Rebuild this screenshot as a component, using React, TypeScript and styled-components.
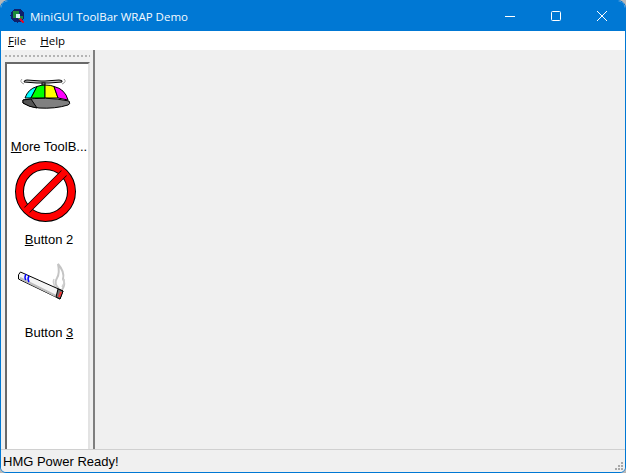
import styled, { createGlobalStyle } from 'styled-components'

const GlobalStyle = createGlobalStyle`
  html, body {
    margin: 0;
    padding: 0;
    width: 626px;
    height: 473px;
    overflow: hidden;
    background: #b8b8b8;
  }
`

const Window = styled.div`
  box-sizing: border-box;
  width: 626px;
  height: 473px;
  display: flex;
  flex-direction: column;
  border: 1px solid #0078d4;
  border-radius: 8px 8px 6px 6px;
  background: #f0f0f0;
  overflow: hidden;
  font-family: 'Liberation Sans', Arial, sans-serif;
`

const TitleBar = styled.header`
  height: 30px;
  flex: none;
  display: flex;
  align-items: center;
  background: #0078d4;
  color: #fff;
`

const AppIcon = styled.svg`
  width: 16px;
  height: 16px;
  margin-left: 9px;
  flex: none;
`

const TitleText = styled.span`
  margin-left: 4px;
  font-family: 'Open Sans', sans-serif;
  font-size: 11.5px;
  color: #f6fbfe;
  white-space: nowrap;
  flex: 1;
`

const WindowButton = styled.div`
  width: 46px;
  height: 30px;
  display: flex;
  align-items: center;
  justify-content: center;
`

const MenuBar = styled.nav`
  height: 19px;
  flex: none;
  box-sizing: border-box;
  display: flex;
  align-items: center;
  background: #fff;
  padding: 0 0 0 7px;
  gap: 14px;
  font-family: 'Open Sans', sans-serif;
  font-size: 11.5px;
  color: #000;
`

const Body = styled.div`
  flex: 1;
  min-height: 0;
  display: flex;
`

const ToolArea = styled.aside`
  width: 94px;
  flex: none;
  box-sizing: border-box;
  display: flex;
  flex-direction: column;
  padding: 5px 3px 0 4px;
  border-right: 2px solid #7f7f7f;
`

const Gripper = styled.div`
  height: 2px;
  flex: none;
  margin: 0 0 5px 0;
  background-image: linear-gradient(to right, #b4b4b4 2px, transparent 2px);
  background-size: 4px 2px;
`

const ToolPanel = styled.div`
  flex: 1;
  box-sizing: border-box;
  display: flex;
  flex-direction: column;
  background: #fff;
  border-top: 2px solid #696969;
  border-left: 2px solid #696969;
  border-right: 2px solid #e3e3e3;
`

const ToolButton = styled.div`
  height: 93px;
  flex: none;
  display: flex;
  flex-direction: column;
  align-items: flex-start;
  padding-top: 3px;
  box-sizing: border-box;
`

const ToolIcon = styled.svg`
  width: 64px;
  height: 64px;
  margin-left: 8px;
  flex: none;
`

const ToolLabel = styled.span`
  box-sizing: border-box;
  width: 100%;
  margin-top: 8px;
  padding-left: 3px;
  text-align: center;
  font-size: 13px;
  line-height: 16px;
  color: #000;
  white-space: nowrap;
`

const Client = styled.main`
  flex: 1;
  background: #f0f0f0;
`

const StatusBar = styled.footer`
  height: 23px;
  flex: none;
  box-sizing: border-box;
  position: relative;
  display: flex;
  align-items: center;
  padding-left: 2px;
  border-top: 1px solid #d0d0d0;
  background: #f0f0f0;
  font-size: 13px;
  color: #000;
`

const Grip = styled.svg`
  position: absolute;
  right: 1px;
  bottom: 1px;
  width: 9px;
  height: 9px;
`

const PixelGroup = styled.g`
  shape-rendering: crispEdges;
`

function HatIcon() {
  return (
    <ToolIcon viewBox="0 0 64 64">
      <path d="M9 15 Q9 13 12 13 L26 14 L30 14 L44 13 Q48 13 47 15 L34 16 L22 16 Z" fill="#bdbdbd" stroke="#000" strokeWidth="1" />
      <path d="M7 12 Q4 15 9 17 M49 12 Q52 15 47 17" fill="none" stroke="#9a9a9a" strokeWidth="1" />
      <rect x="27" y="16" width="3" height="2" fill="#d0d0d0" stroke="#000" strokeWidth="1" />
      <path d="M10 31 Q13 22 22 19.5 L16 31 Z" fill="#00ffff" stroke="#000" strokeWidth="1" />
      <path d="M16 31 L22 19.5 Q26 18 30 18 L30 31 Z" fill="#00ff00" stroke="#000" strokeWidth="1" />
      <path d="M30 31 L30 18 Q36 18 39 19.5 L43 31 Z" fill="#ffff00" stroke="#000" strokeWidth="1" />
      <path d="M43 31 L39 19.5 Q50 22 53 33 Z" fill="#ff00ff" stroke="#000" strokeWidth="1" />
      <path d="M8 33 Q30 29 54 34 Q56 37 53 38 Q40 42 24 41 Q14 40 8 36 Z" fill="#808080" stroke="#000" strokeWidth="1" />
      <path d="M8 33 L16 32 L22 41 Q14 40 8 36 Z" fill="#555" stroke="#000" strokeWidth="1" />
    </ToolIcon>
  )
}

function NoIcon() {
  return (
    <ToolIcon viewBox="0 0 64 64">
      <circle cx="30.5" cy="31.5" r="26" fill="none" stroke="#000" strokeWidth="9" />
      <circle cx="30.5" cy="31.5" r="26" fill="none" stroke="#ff0000" strokeWidth="7" />
      <path d="M49 13 L12 50" stroke="#000" strokeWidth="8" />
      <path d="M51 11 L10 52" stroke="#ff0000" strokeWidth="6.5" />
    </ToolIcon>
  )
}

function CigaretteIcon() {
  return (
    <ToolIcon viewBox="0 0 64 64">
      <path d="M45 37 Q38 31 42 25 Q45 20 43 11 Q50 19 48 26 Q51 31 47 37" fill="none" stroke="#c4c4c4" strokeWidth="2" />
      <path d="M41 35 Q37 30 39 26 M47 34 Q50 30 49 26" fill="none" stroke="#d0d0d0" strokeWidth="1.5" />
      <path d="M5.5 19 L48 38 L45 46 L3.5 26 Q2.5 21 5.5 19 Z" fill="#f4f4f4" stroke="#000" strokeWidth="1" />
      <path d="M5 25 L45 45" stroke="#bdbdbd" strokeWidth="2" />
      <path d="M11 21 Q9 25 11 27 M14 23 Q12 26 14 29" fill="none" stroke="#0000ff" strokeWidth="1.5" />
      <path d="M43 36 L48 38 L45 46 L41 44 Z" fill="#707070" stroke="#000" strokeWidth="1" />
      <path d="M46 39 L44 44" stroke="#ff3030" strokeWidth="2" />
    </ToolIcon>
  )
}

export default function App() {
  return (
    <Window>
      <GlobalStyle />
      <TitleBar>
        <AppIcon viewBox="0 0 16 16">
          <PixelGroup>
            <circle cx="7.5" cy="7.5" r="7" fill="#10206a" />
            <path d="M3 3 H9 V6 H6 V10 H3 Z" fill="#1d8a3c" />
            <path d="M8 8 H13 V11 H8 Z" fill="#1d8a3c" />
            <rect x="6" y="6" width="4" height="4" fill="#d8eef8" />
            <path d="M10 11 L14 15" stroke="#d01030" strokeWidth="2" />
          </PixelGroup>
        </AppIcon>
        <TitleText>MiniGUI ToolBar WRAP Demo</TitleText>
        <WindowButton>
          <svg width="10" height="10" viewBox="0 0 10 10"><path d="M0 5.5 H10" stroke="#fff" strokeWidth="1" /></svg>
        </WindowButton>
        <WindowButton>
          <svg width="10" height="10" viewBox="0 0 10 10"><rect x="0.5" y="0.5" width="9" height="9" rx="1" fill="none" stroke="#fff" strokeWidth="1" /></svg>
        </WindowButton>
        <WindowButton>
          <svg width="10" height="10" viewBox="0 0 10 10"><path d="M0 0 L10 10 M10 0 L0 10" stroke="#fff" strokeWidth="1" /></svg>
        </WindowButton>
      </TitleBar>
      <MenuBar>
        <span><u>F</u>ile</span>
        <span><u>H</u>elp</span>
      </MenuBar>
      <Body>
        <ToolArea>
          <Gripper />
          <ToolPanel>
            <ToolButton>
              <HatIcon />
              <ToolLabel><u>M</u>ore ToolB...</ToolLabel>
            </ToolButton>
            <ToolButton>
              <NoIcon />
              <ToolLabel><u>B</u>utton 2</ToolLabel>
            </ToolButton>
            <ToolButton>
              <CigaretteIcon />
              <ToolLabel>Button <u>3</u></ToolLabel>
            </ToolButton>
          </ToolPanel>
        </ToolArea>
        <Client />
      </Body>
      <StatusBar>
        HMG Power Ready!
        <Grip viewBox="0 0 9 9">
          <PixelGroup fill="#a8a8a8">
            <rect x="6" y="0" width="2" height="2" />
            <rect x="3" y="3" width="2" height="2" />
            <rect x="6" y="3" width="2" height="2" />
            <rect x="0" y="6" width="2" height="2" />
            <rect x="3" y="6" width="2" height="2" />
            <rect x="6" y="6" width="2" height="2" />
          </PixelGroup>
        </Grip>
      </StatusBar>
    </Window>
  )
}
